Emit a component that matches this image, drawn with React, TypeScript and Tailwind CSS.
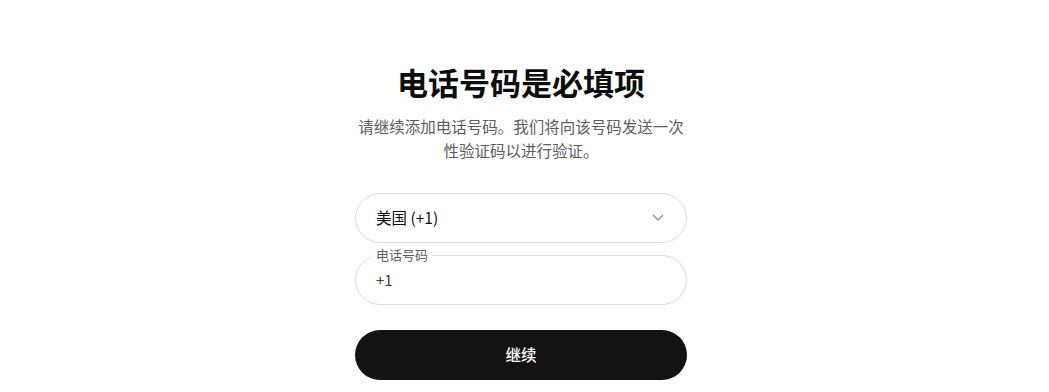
import React from "react";

export default function App() {
  return (
    <div
      className="w-full min-h-[392px] bg-white flex flex-col items-center pt-[64px] pr-[7px]"
      style={{ fontFamily: '"Noto Sans CJK SC", "Noto Sans", sans-serif' }}
    >
      <h1 className="text-[31px] leading-[36px] font-semibold text-[#0d0d0d]">电话号码是必填项</h1>
      <p className="mt-[14px] w-[340px] text-center text-[15.5px] leading-[24px] text-[#5d5d5d]">
        请继续添加电话号码。我们将向该号码发送一次性验证码以进行验证。
      </p>
      <div className="mt-[31px] w-[332px] flex flex-col">
        <div className="h-[50px] rounded-full border border-[#dcdcdc] flex items-center justify-between pl-[20px] pr-[22px]">
          <span className="text-[15.5px] text-[#0d0d0d]">美国 (+1)</span>
          <svg width="12" height="8" viewBox="0 0 12 8" fill="none">
            <path d="M1.5 1.5L6 6L10.5 1.5" stroke="#8f8f8f" strokeWidth="1.3" strokeLinecap="round" strokeLinejoin="round" />
          </svg>
        </div>
        <div className="relative mt-[12px] h-[50px] rounded-full border border-[#dcdcdc] flex items-center pl-[20px]">
          <span className="absolute left-[16px] top-[-10px] bg-white px-[4px] text-[13px] leading-[18px] text-[#5d5d5d]">电话号码</span>
          <span className="text-[15px] text-[#3a3a3a]">+1</span>
        </div>
        <button className="mt-[25px] h-[50px] rounded-full bg-[#131313] text-white text-[15.5px] font-medium flex items-center justify-center">
          继续
        </button>
      </div>
    </div>
  );
}
